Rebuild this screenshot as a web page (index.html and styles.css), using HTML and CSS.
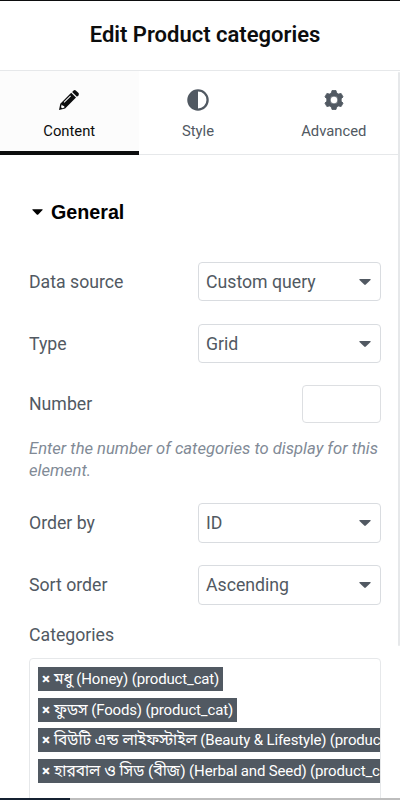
FILE: index.html
```html
<!DOCTYPE html>
<html lang="en">
<head>
<meta charset="utf-8">
<title>Edit Product categories</title>
<link rel="stylesheet" href="styles.css">
</head>
<body>
<main class="panel">
  <header class="header"><h1 class="title">Edit Product categories</h1></header>
  <nav class="tabs">
    <a class="tab tab-active">
      <svg class="icon" viewBox="0 0 22 22"><path fill="currentColor" fill-rule="evenodd" d="M13.2 3.8 18 8.6 7.1 19.5 1 21 2.3 14.7zM3.7 15.6 3 18.2 4.3 19.2 6.4 18.6 6.2 16.9 4.8 16.8zM12.3 6.5 5.7 13.1 6.4 13.8 13 7.2z"/><path fill="currentColor" d="M14.1 2.9 15.6 1.4Q16.7.5 17.8 1.4L20.5 4.1Q21.4 5.2 20.5 6.3L19 7.8z"/></svg>
      <span>Content</span>
    </a>
    <a class="tab">
      <svg class="icon" viewBox="0 0 22 22"><circle cx="11" cy="11" r="9.6" fill="none" stroke="currentColor" stroke-width="2.3"/><path fill="currentColor" d="M11 1a10 10 0 0 0 0 20z"/></svg>
      <span>Style</span>
    </a>
    <a class="tab">
      <svg class="icon" viewBox="0 0 22 22"><path fill="currentColor" stroke="currentColor" stroke-width=".8" stroke-linejoin="round" fill-rule="evenodd" d="M9 1.500h4l.7 2.500 1.800 1 2.600-.6 2 3.500-1.900 1.900v2.400l1.900 1.900-2 3.500-2.600-.6-1.800 1-.7 2.500H9l-.7-2.500-1.800-1-2.600.6-2-3.500 1.900-1.900V9.800L1.900 7.900l2-3.500 2.600.6 1.800-1zM11 7.100a3.900 3.900 0 1 0 0 7.800 3.900 3.900 0 0 0 0-7.800z"/></svg>
      <span>Advanced</span>
    </a>
  </nav>
  <section class="body">
    <h2 class="section-title"><svg class="caret" viewBox="0 0 12 6"><path d="M.8 0h10.400q.8.200.3.900L6.800 5.600q-.8.600-1.600 0L.5.900Q0 .2.800 0z" fill="currentColor"/></svg>General</h2>
    <div class="row row-source"><span>Data source</span><div class="select"><span>Custom query</span><svg class="caret" viewBox="0 0 12 6"><path d="M.8 0h10.400q.8.200.3.900L6.800 5.600q-.8.600-1.600 0L.5.900Q0 .2.800 0z" fill="currentColor"/></svg></div></div>
    <div class="row row-type"><span>Type</span><div class="select"><span>Grid</span><svg class="caret" viewBox="0 0 12 6"><path d="M.8 0h10.400q.8.200.3.900L6.800 5.600q-.8.600-1.600 0L.5.900Q0 .2.800 0z" fill="currentColor"/></svg></div></div>
    <div class="row row-number"><span>Number</span><input class="number" aria-label="Number"></div>
    <p class="hint">Enter the number of categories to display for this element.</p>
    <div class="row row-order"><span>Order by</span><div class="select"><span>ID</span><svg class="caret" viewBox="0 0 12 6"><path d="M.8 0h10.400q.8.200.3.900L6.800 5.600q-.8.600-1.600 0L.5.900Q0 .2.800 0z" fill="currentColor"/></svg></div></div>
    <div class="row row-sort"><span>Sort order</span><div class="select"><span>Ascending</span><svg class="caret" viewBox="0 0 12 6"><path d="M.8 0h10.400q.8.200.3.900L6.800 5.600q-.8.600-1.600 0L.5.900Q0 .2.800 0z" fill="currentColor"/></svg></div></div>
    <div class="label">Categories</div>
    <ul class="chips">
      <li class="chip"><b class="remove">×</b><span><span class="bn" lang="bn">মধু</span> (Honey) (product_cat)</span></li>
      <li class="chip"><b class="remove">×</b><span><span class="bn" lang="bn">ফুডস</span> (Foods) (product_cat)</span></li>
      <li class="chip"><b class="remove">×</b><span><span class="bn" lang="bn">বিউটি এন্ড লাইফস্টাইল</span> (Beauty &amp; Lifestyle) (product_cat)</span></li>
      <li class="chip"><b class="remove">×</b><span><span class="bn" lang="bn">হারবাল ও সিড (বীজ)</span> (Herbal and Seed) (product_cat)</span></li>
    </ul>
  </section>
  <div class="scrollbar"></div>
  <footer class="footer"><span class="footer-dark"></span></footer>
</main>
</body>
</html>
```
FILE: styles.css
```css
* { box-sizing: border-box; }
body { margin: 0; overflow: hidden; background: #fff; color: #515962; font: 17.7px/22px Roboto, "Noto Sans Bengali", "Noto Sans", sans-serif; }
.panel { position: relative; height: 800px; overflow: hidden; border-top: 1px solid #0c0d0e; }
.header { height: 70px; display: flex; align-items: center; justify-content: center; border-bottom: 1px solid #e6e8ea; padding: 0 0 1px 10px; }
.title { margin: 0; font-size: 22px; line-height: 28px; font-weight: 600; color: #0c0d0e; white-space: nowrap; }
.tabs { display: grid; grid-template-columns: 138.500px 119px 1fr; height: 84px; border-bottom: 1px solid #e6e8ea; }
.tab { display: flex; flex-direction: column; align-items: center; padding-top: 18px; gap: 9px; font-size: 14.800px; }
.tab:last-child { padding-left: 10px; }
.tab-active { background: #fcfcfc; color: #0c0d0e; border-bottom: 4px solid #0c0d0e; margin-bottom: -1px; }
.icon { width: 22px; height: 22px; flex: none; }
.body { padding: 0 19.500px 0 29px; }
.section-title { display: flex; align-items: center; gap: 8px; margin: 46px 0 0 3px; height: 22px; color: #000; font: bold 19.700px/22px "Liberation Sans", sans-serif; }
.caret { width: 12px; height: 6px; flex: none; }
.section-title .caret { width: 11px; }
.row { display: flex; align-items: center; justify-content: space-between; height: 39px; }
.row-source { margin-top: 39px; }
.row-type { margin-top: 23px; }
.row-number { margin-top: 22px; height: 38px; }
.row-order { margin-top: 21px; height: 40px; }
.row-sort { margin-top: 22px; height: 40px; }
.select { display: flex; align-items: center; justify-content: space-between; width: 182.500px; height: 100%; padding: 0 9px 0 7px; border: 1px solid #d9dce0; border-radius: 4px; }
.number { width: 79px; height: 38px; border: 1px solid #dddfe2; border-radius: 4px; background: #fff; }
.hint { margin: 15px -10px 0 0; width: 356px; color: #818a96; font-size: 16.600px; line-height: 22px; font-style: italic; }
.label { margin-top: 19px; height: 22px; }
.chips { list-style: none; margin: 12px 0 0; padding: 8px 0 0 8px; width: 352px; height: 160px; overflow: hidden; border: 1px solid #e6e8ea; border-radius: 4px; }
.chip { display: flex; align-items: center; width: max-content; height: 24px; margin-bottom: 6.500px; padding: 0 4px; background: #515962; color: #fff; font-size: 15px; letter-spacing: -.15px; white-space: nowrap; }
.bn { font-size: 15.500px; letter-spacing: 0; }
.remove { width: 12px; font-size: 15px; font-weight: 900; }
.scrollbar { position: absolute; right: 0; top: 71px; width: 2px; height: 574px; background: #e6e8ea; border-radius: 2px; }
.footer { position: absolute; left: 0; right: 0; bottom: 0; height: 2px; background: #bdbdbd; }
.footer-dark { display: block; width: 70px; height: 2px; background: #152131; }
```
